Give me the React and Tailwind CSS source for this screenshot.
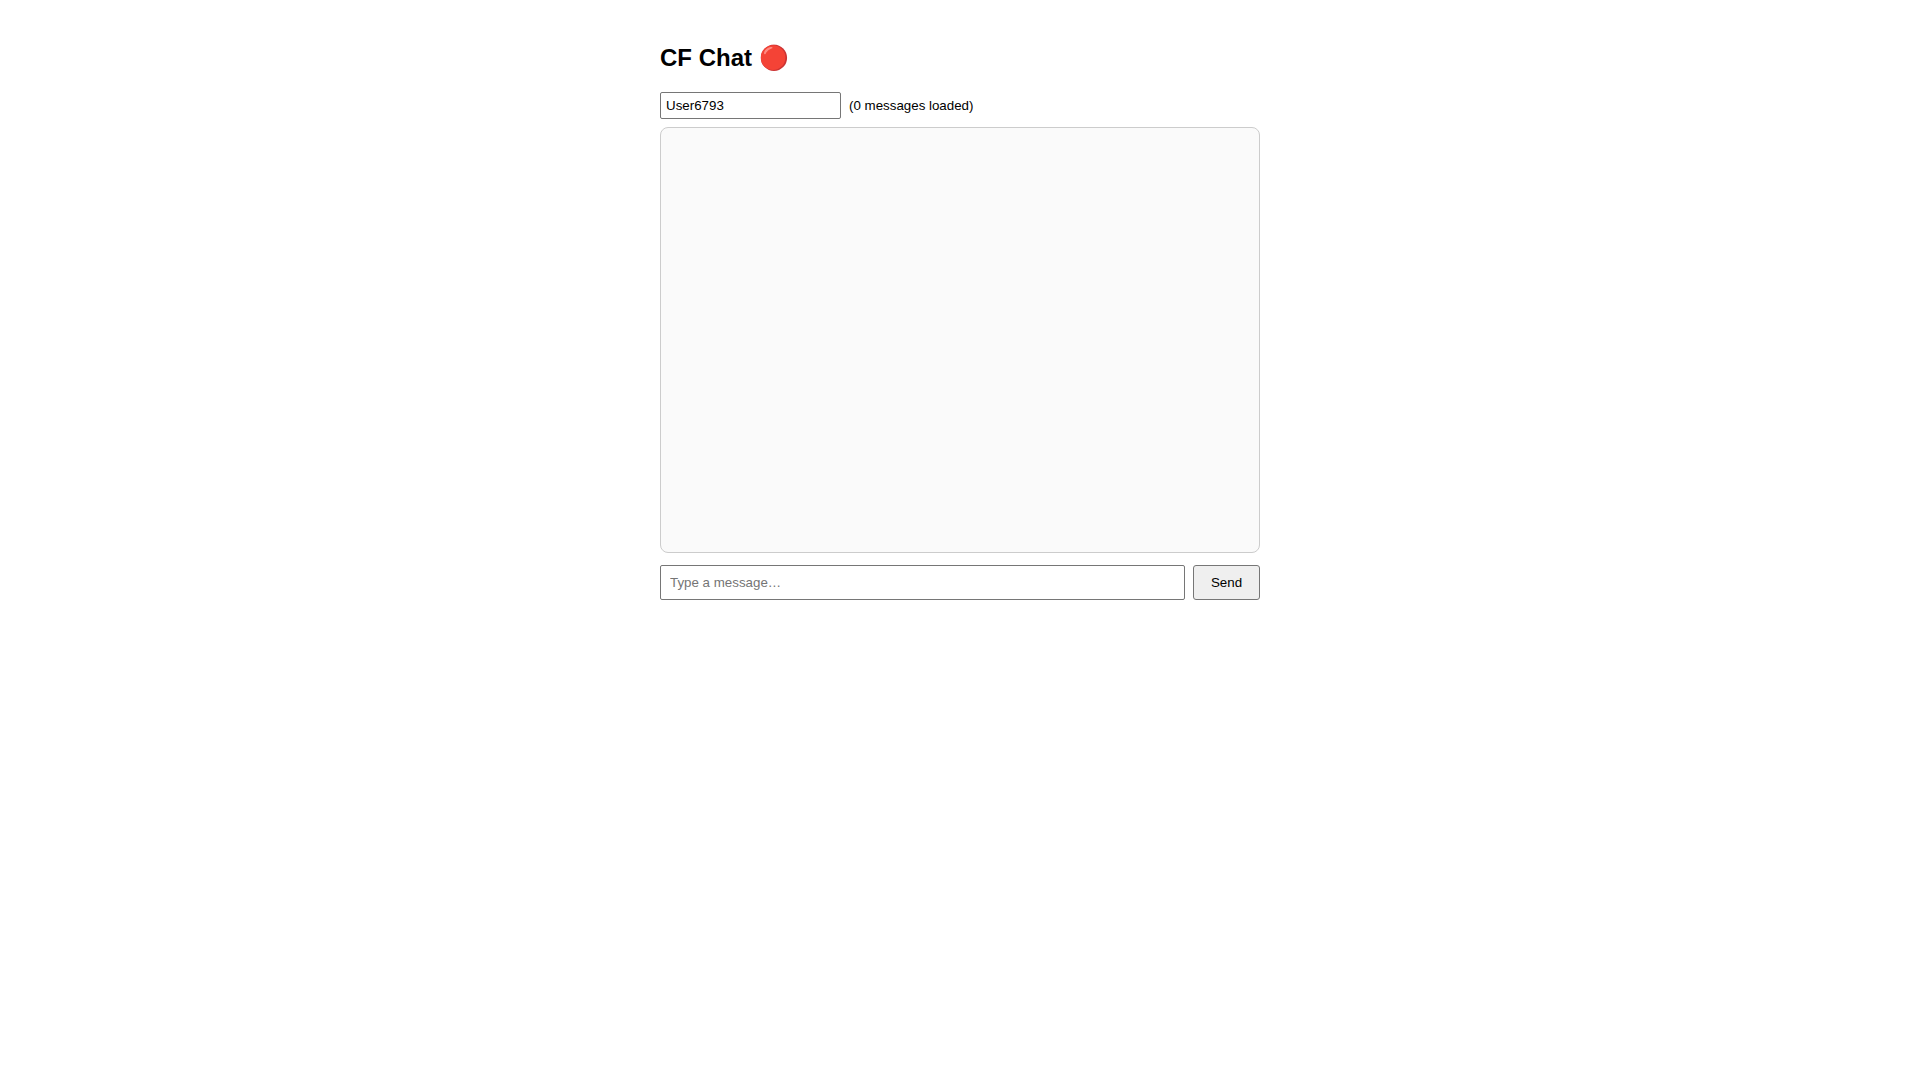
export default function App() {
  return (
    <div className="min-h-screen bg-white text-black font-[Arial,'Liberation_Sans',sans-serif]">
      <div className="mx-auto w-[600px] pt-[40px]">
        <h1 className="text-[24px] font-bold leading-[36px] h-[36px] mb-[16px]">CF Chat 🔴</h1>

        <div className="flex items-center gap-[8px] mb-[8px] h-[27px]">
          <input
            defaultValue="User6793"
            className="w-[181px] h-[27px] px-[5px] text-[13.3333px] text-black border border-[#767676] rounded-[2px] outline-none"
          />
          <span className="text-[13.3333px]">(0 messages loaded)</span>
        </div>

        <div className="h-[426px] bg-[#fafafa] border border-[#cccccc] rounded-[8px] mb-[12px]"></div>

        <div className="flex gap-[8px] h-[35px]">
          <input
            placeholder="Type a message…"
            className="flex-1 min-w-0 px-[9px] text-[13.3333px] text-black border border-[#767676] rounded-[2px] outline-none placeholder:text-[#757575]"
          />
          <button className="w-[67px] text-[13.3333px] text-black bg-[#efefef] border border-[#767676] rounded-[3px]">
            Send
          </button>
        </div>
      </div>
    </div>
  );
}
